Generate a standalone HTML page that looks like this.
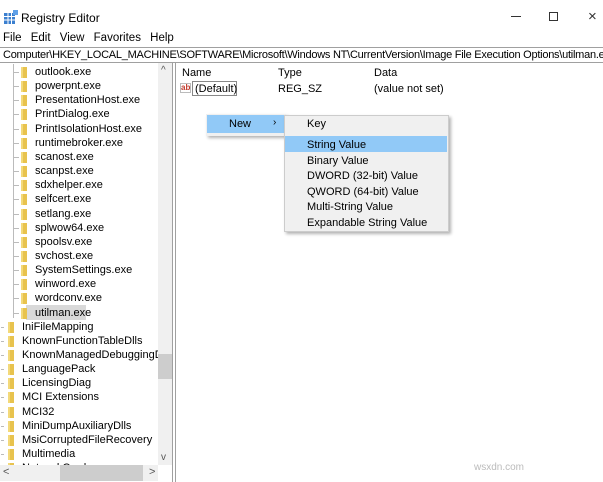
<!DOCTYPE html>
<html><head><meta charset="utf-8"><style>
*{margin:0;padding:0;box-sizing:border-box}
body{width:603px;height:482px;background:#fff;font-family:"Liberation Sans",sans-serif;font-size:11px;color:#000;position:relative;overflow:hidden}
.a{position:absolute;white-space:nowrap}
.f{position:absolute;width:6px;height:11px;background:#e8c34e;border-left:2px solid #f3d97a}
.t{position:absolute;font-size:11px}
</style></head><body>
<!-- title -->
<svg class="a" style="left:4px;top:10px" width="14" height="14"><rect x="0" y="3" width="11" height="11" fill="#3b7fcf"/><g stroke="#fff" stroke-width="1"><line x1="0" y1="6.5" x2="11" y2="6.5"/><line x1="0" y1="10" x2="11" y2="10"/><line x1="4" y1="3" x2="4" y2="14"/><line x1="7.5" y1="3" x2="7.5" y2="14"/></g><rect x="9" y="0" width="5" height="5" fill="#5fa0e8"/></svg>
<div class="a" style="left:21px;top:11px;font-size:12px">Registry Editor</div>
<div class="a" style="left:511px;top:16px;width:10px;height:1px;background:#333"></div>
<div class="a" style="left:549px;top:12px;width:9px;height:9px;border:1px solid #333"></div>
<div class="a" style="left:588px;top:8px;font-size:15px;color:#333">×</div>
<!-- menu -->
<div class="a" style="left:3px;top:32px;font-size:11.5px;word-spacing:6px">File Edit View Favorites Help</div>
<!-- address -->
<div class="a" style="left:0;top:47px;width:603px;height:16px;border:1px solid #a0a0a0;border-left:none;border-right:none;padding:1px 0 0 3px;font-size:11px;letter-spacing:-0.25px;overflow:hidden">Computer\HKEY_LOCAL_MACHINE\SOFTWARE\Microsoft\Windows NT\CurrentVersion\Image File Execution Options\utilman.exe</div>
<!-- tree -->
<div class="a" style="left:172px;top:63px;width:1px;height:419px;background:#a0a0a0"></div>
<div class="a" style="left:175px;top:63px;width:1px;height:419px;background:#a0a0a0"></div>
<div class="a" style="left:0;top:64px;width:158px;height:401px;overflow:hidden">
<div class="a" style="left:13px;top:0;width:1px;height:254px;background:#bbb"></div>
<div class="a" style="left:26px;top:241px;width:60px;height:15px;background:#d9d9d9"></div>
<div id="tr" class="a" style="left:0;top:-64px;width:158px;height:470px"></div>
</div>
<div class="a" style="left:158px;top:63px;width:14px;height:402px;background:#f0f0f0"></div>
<div class="a" style="left:158px;top:354px;width:14px;height:25px;background:#cdcdcd"></div>
<div class="a" style="left:161px;top:65px;font-size:10px;color:#555">^</div>
<div class="a" style="left:161px;top:452px;font-size:10px;color:#555">v</div>
<div class="a" style="left:0;top:465px;width:158px;height:16px;background:#f0f0f0"></div>
<div class="a" style="left:60px;top:465px;width:83px;height:16px;background:#cdcdcd"></div>
<div class="a" style="left:3px;top:466px;font-size:11px;color:#555">&lt;</div>
<div class="a" style="left:149px;top:466px;font-size:11px;color:#555">&gt;</div>
<!-- right -->
<div class="a" style="left:182px;top:67px">Name</div>
<div class="a" style="left:278px;top:67px">Type</div>
<div class="a" style="left:374px;top:67px">Data</div>
<div class="a" style="left:180px;top:83px;width:11px;height:10px;border:1px solid #bbb;font-size:8px;color:#c0392b;font-weight:bold;line-height:7px">ab</div>
<div class="a" style="left:192px;top:81px;width:45px;height:15px;border:1px solid #888;padding:1px 0 0 2px">(Default)</div>
<div class="a" style="left:278px;top:83px">REG_SZ</div>
<div class="a" style="left:374px;top:83px">(value not set)</div>
<!-- context menu -->
<div class="a" style="left:206px;top:114px;width:80px;height:22px;background:#f0f0f0;box-shadow:2px 2px 3px rgba(0,0,0,.3)"></div>
<div class="a" style="left:207px;top:115px;width:77px;height:18px;background:#91c9f7"></div>
<div class="a" style="left:229px;top:118px">New</div>
<div class="a" style="left:273px;top:117px;font-size:10px">›</div>
<div class="a" style="left:284px;top:115px;width:165px;height:117px;background:#f0f0f0;border:1px solid #ccc;box-shadow:2px 2px 3px rgba(0,0,0,.3)"></div>
<div class="a" style="left:285px;top:136px;width:162px;height:16px;background:#91c9f7"></div>
<div class="a" style="left:307px;top:118px">Key</div>
<div class="a" style="left:307px;top:138px;line-height:15.5px">String Value<br>Binary Value<br>DWORD (32-bit) Value<br>QWORD (64-bit) Value<br>Multi-String Value<br>Expandable String Value</div>
<div class="a" style="left:474px;top:462px;font-size:10px;color:#bbb">wsxdn.com</div>
<script>
var c=["outlook.exe","powerpnt.exe","PresentationHost.exe","PrintDialog.exe","PrintIsolationHost.exe","runtimebroker.exe","scanost.exe","scanpst.exe","sdxhelper.exe","selfcert.exe","setlang.exe","splwow64.exe","spoolsv.exe","svchost.exe","SystemSettings.exe","winword.exe","wordconv.exe","utilman.exe"];
var p=["IniFileMapping","KnownFunctionTableDlls","KnownManagedDebuggingDlls","LanguagePack","LicensingDiag","MCI Extensions","MCI32","MiniDumpAuxiliaryDlls","MsiCorruptedFileRecovery","Multimedia","NetworkCards"];
var h="",y=66;
c.forEach(function(n){h+='<div class="a" style="left:14px;top:'+(y+6)+'px;width:5px;height:1px;background:#bbb"></div><div class="f" style="left:21px;top:'+(y+1)+'px"></div><div class="t a" style="left:35px;top:'+y+'px">'+n+'</div>';y+=14.15;});
p.forEach(function(n){h+='<div class="a" style="left:1px;top:'+(y+6)+'px;width:3px;height:1px;background:#bbb"></div><div class="f" style="left:8px;top:'+(y+1)+'px"></div><div class="t a" style="left:22px;top:'+y+'px">'+n+'</div>';y+=14.15;});
document.getElementById('tr').innerHTML=h;
</script>
</body></html>
